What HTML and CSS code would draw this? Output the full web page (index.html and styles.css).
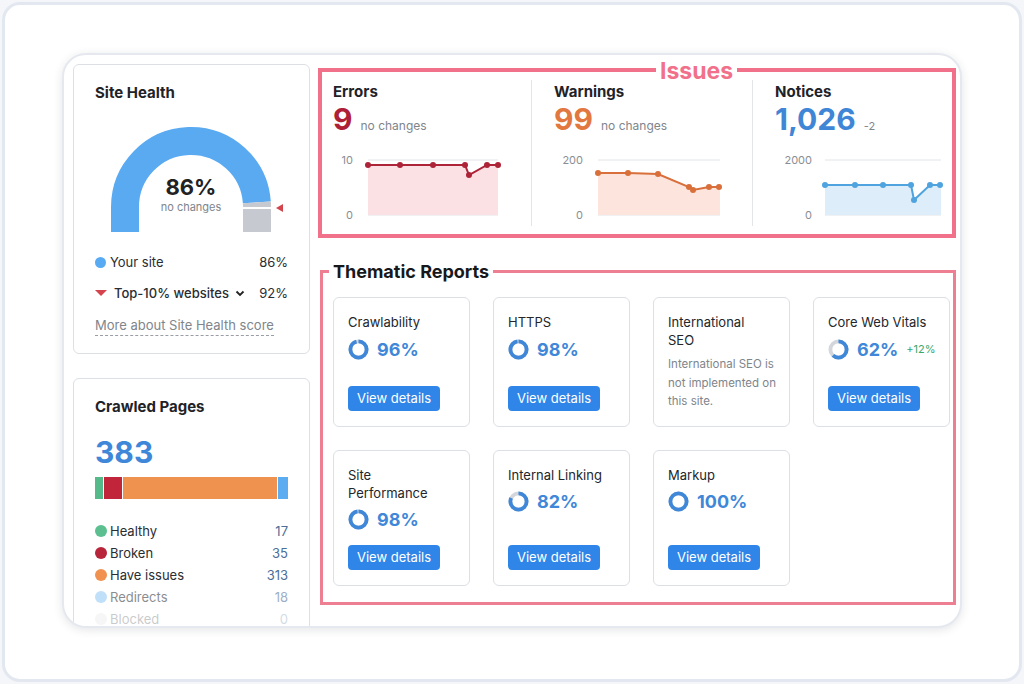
FILE: index.html
```html
<!DOCTYPE html>
<html lang="en">
<head>
    <meta charset="UTF-8">
    <meta name="viewport" content="width=device-width, initial-scale=1.0">
    <title>Site Audit Overview</title>
    <link rel="stylesheet" href="styles.css">
</head>
<body>
    <div class="frame">
        <div class="panel">
            <aside class="side">
                <section class="card health">
                    <h2 class="card-title">Site Health</h2>
                    <svg class="gauge" width="193" height="112" viewBox="0 0 193 112">
                        <path class="gauge-fill" d="M30 112 V87 A66 66 0 0 1 161.84 82.4"/>
                        <path class="gauge-rest" d="M161.84 82.4 A66 66 0 0 1 162 87 V112"/>
                        <line class="gauge-mark" x1="147" y1="88" x2="177" y2="88"/>
                        <polygon class="gauge-pointer" points="181,88 188,84 188,92"/>
                        <text class="gauge-value" x="96" y="75" text-anchor="middle">86%</text>
                        <text class="gauge-note" x="96" y="91" text-anchor="middle">no changes</text>
                    </svg>
                    <ul class="legend health-legend">
                        <li><span class="dot dot-site"></span>Your site<span class="value">86%</span></li>
                        <li class="top-sites">
                            <span class="tri-down"></span>Top-10% websites
                            <svg class="chevron" width="10" height="10" viewBox="0 0 10 10"><path d="M1.5 3.5 L5 7 L8.5 3.5"/></svg>
                            <span class="value">92%</span>
                        </li>
                    </ul>
                    <a class="more-link" href="#">More about Site Health score</a>
                </section>

                <section class="card crawled">
                    <h2 class="card-title">Crawled Pages</h2>
                    <div class="crawled-total">383</div>
                    <div class="stack-bar">
                        <span class="seg seg-healthy" style="width: 4.4%"></span>
                        <span class="seg seg-broken" style="width: 9.1%"></span>
                        <span class="seg seg-issues" style="width: 81.0%"></span>
                        <span class="seg seg-redirects" style="width: 5.5%"></span>
                    </div>
                    <ul class="legend crawled-legend">
                        <li><span class="dot dot-healthy"></span>Healthy<span class="value">17</span></li>
                        <li><span class="dot dot-broken"></span>Broken<span class="value">35</span></li>
                        <li><span class="dot dot-issues"></span>Have issues<span class="value">313</span></li>
                        <li class="faded"><span class="dot dot-redirects"></span>Redirects<span class="value">18</span></li>
                        <li class="faded-more"><span class="dot dot-blocked"></span>Blocked<span class="value">0</span></li>
                    </ul>
                </section>
            </aside>

            <main class="main">
                <section class="issues-box">
                    <span class="box-label issues-label">Issues</span>

                    <div class="issue errors">
                        <h3 class="issue-title">Errors</h3>
                        <div class="issue-count"><span class="count">9</span><span class="change">no changes</span></div>
                        <svg class="trend" width="180" height="72" viewBox="0 0 180 72">
                            <line class="grid" x1="35" y1="10" x2="165" y2="10"/>
                            <line class="grid" x1="35" y1="65" x2="165" y2="65"/>
                            <text class="axis" x="20" y="14" text-anchor="end">10</text>
                            <text class="axis" x="20" y="69" text-anchor="end">0</text>
                            <polygon class="area" points="35,65 35,15 67,15 100,15 132,15 136,25 154,15 165,15 165,65"/>
                            <polyline class="series" points="35,15 67,15 100,15 132,15 136,25 154,15 165,15"/>
                            <g class="points">
                                <circle cx="35" cy="15" r="3"/><circle cx="67" cy="15" r="3"/><circle cx="100" cy="15" r="3"/>
                                <circle cx="132" cy="15" r="3"/><circle cx="136" cy="25" r="3"/><circle cx="154" cy="15" r="3"/>
                                <circle cx="165" cy="15" r="3"/>
                            </g>
                        </svg>
                    </div>

                    <div class="issue warnings">
                        <h3 class="issue-title">Warnings</h3>
                        <div class="issue-count"><span class="count">99</span><span class="change">no changes</span></div>
                        <svg class="trend" width="180" height="72" viewBox="0 0 180 72">
                            <line class="grid" x1="44" y1="10" x2="166" y2="10"/>
                            <line class="grid" x1="44" y1="65" x2="166" y2="65"/>
                            <text class="axis" x="29" y="14" text-anchor="end">200</text>
                            <text class="axis" x="29" y="69" text-anchor="end">0</text>
                            <polygon class="area" points="44,65 44,23 74,23 104,24 135,37 139,40 155,37 166,37 166,65"/>
                            <polyline class="series" points="44,23 74,23 104,24 135,37 139,40 155,37 166,37"/>
                            <g class="points">
                                <circle cx="44" cy="23" r="3"/><circle cx="74" cy="23" r="3"/><circle cx="104" cy="24" r="3"/>
                                <circle cx="135" cy="37" r="3"/><circle cx="139" cy="40" r="3"/><circle cx="155" cy="37" r="3"/>
                                <circle cx="165" cy="37" r="3"/>
                            </g>
                        </svg>
                    </div>

                    <div class="issue notices">
                        <h3 class="issue-title">Notices</h3>
                        <div class="issue-count"><span class="count">1,026</span><span class="change">-2</span></div>
                        <svg class="trend" width="177" height="72" viewBox="0 0 177 72">
                            <line class="grid" x1="50" y1="10" x2="166" y2="10"/>
                            <line class="grid" x1="50" y1="65" x2="166" y2="65"/>
                            <text class="axis" x="37" y="14" text-anchor="end">2000</text>
                            <text class="axis" x="37" y="69" text-anchor="end">0</text>
                            <polygon class="area" points="50,65 50,35 80,35 108,35 136,35 139,50 155,35 166,35 166,65"/>
                            <polyline class="series" points="50,35 80,35 108,35 136,35 139,50 155,35 166,35"/>
                            <g class="points">
                                <circle cx="50" cy="35" r="3"/><circle cx="80" cy="35" r="3"/><circle cx="108" cy="35" r="3"/>
                                <circle cx="136" cy="35" r="3"/><circle cx="139" cy="50" r="3"/><circle cx="155" cy="35" r="3"/>
                                <circle cx="165" cy="35" r="3"/>
                            </g>
                        </svg>
                    </div>
                </section>

                <section class="thematic">
                    <h2 class="box-label thematic-label">Thematic Reports</h2>
                    <div class="report-grid">
                        <div class="report">
                            <div class="report-title">Crawlability</div>
                            <div class="report-score">
                                <svg class="donut" viewBox="0 0 22 22"><circle class="track" cx="11" cy="11" r="8.5"/><circle class="arc" cx="11" cy="11" r="8.5" pathLength="100" stroke-dasharray="96 100"/></svg>
                                <span class="pct">96%</span>
                            </div>
                            <button class="btn">View details</button>
                        </div>
                        <div class="report">
                            <div class="report-title">HTTPS</div>
                            <div class="report-score">
                                <svg class="donut" viewBox="0 0 22 22"><circle class="track" cx="11" cy="11" r="8.5"/><circle class="arc" cx="11" cy="11" r="8.5" pathLength="100" stroke-dasharray="98 100"/></svg>
                                <span class="pct">98%</span>
                            </div>
                            <button class="btn">View details</button>
                        </div>
                        <div class="report">
                            <div class="report-title">International SEO</div>
                            <p class="report-note">International SEO is not implemented on this site.</p>
                        </div>
                        <div class="report">
                            <div class="report-title">Core Web Vitals</div>
                            <div class="report-score">
                                <svg class="donut" viewBox="0 0 22 22"><circle class="track" cx="11" cy="11" r="8.5"/><circle class="arc" cx="11" cy="11" r="8.5" pathLength="100" stroke-dasharray="62 100"/></svg>
                                <span class="pct">62%</span>
                                <span class="delta">+12%</span>
                            </div>
                            <button class="btn">View details</button>
                        </div>
                        <div class="report">
                            <div class="report-title">Site Performance</div>
                            <div class="report-score">
                                <svg class="donut" viewBox="0 0 22 22"><circle class="track" cx="11" cy="11" r="8.5"/><circle class="arc" cx="11" cy="11" r="8.5" pathLength="100" stroke-dasharray="98 100"/></svg>
                                <span class="pct">98%</span>
                            </div>
                            <button class="btn">View details</button>
                        </div>
                        <div class="report">
                            <div class="report-title">Internal Linking</div>
                            <div class="report-score">
                                <svg class="donut" viewBox="0 0 22 22"><circle class="track" cx="11" cy="11" r="8.5"/><circle class="arc" cx="11" cy="11" r="8.5" pathLength="100" stroke-dasharray="82 100"/></svg>
                                <span class="pct">82%</span>
                            </div>
                            <button class="btn">View details</button>
                        </div>
                        <div class="report">
                            <div class="report-title">Markup</div>
                            <div class="report-score">
                                <svg class="donut" viewBox="0 0 22 22"><circle class="track" cx="11" cy="11" r="8.5"/><circle class="arc" cx="11" cy="11" r="8.5" pathLength="100" stroke-dasharray="100 100"/></svg>
                                <span class="pct">100%</span>
                            </div>
                            <button class="btn">View details</button>
                        </div>
                    </div>
                </section>

                <h2 class="next-title">Top Issues</h2>
            </main>
        </div>
    </div>
</body>
</html>
```

FILE: styles.css
```css
:root {
    --blue: #3f87d8;
    --button: #2f86e8;
    --pink: #f1718a;
    --pink-soft: #ee7f93;
    --text: #1f2328;
    --muted: #80858c;
    --line: #dcdfe4;
}

* {
    margin: 0;
    padding: 0;
    box-sizing: border-box;
}

body {
    background: #f4f6f9;
    font-family: Inter, "Noto Sans", sans-serif;
    color: var(--text);
}

.frame {
    width: 1020px;
    height: 680px;
    margin: 2px;
    border: 3px solid #e3e8f0;
    border-radius: 18px;
    background: #fff;
    padding: 48px 0 0 57px;
}

.panel {
    width: 900px;
    height: 575px;
    border: 2px solid #e5e9ef;
    border-radius: 24px;
    box-shadow: 0 2px 10px rgba(30, 40, 60, 0.12);
    background: #fff;
    overflow: hidden;
    display: grid;
    grid-template-columns: 237px 1fr;
    column-gap: 8px;
    align-items: start;
    padding: 9px 4px 0 9px;
}

/* left column cards */

.card {
    border: 1px solid var(--line);
    border-radius: 6px;
    background: #fff;
    padding: 18px 21px 17px;
}

.card + .card {
    margin-top: 24px;
}

.card-title {
    font-size: 15px;
    line-height: 20px;
    font-weight: 700;
}

.gauge {
    display: block;
    margin-top: 17px;
}

.gauge path {
    fill: none;
    stroke-width: 28;
}

.gauge-fill {
    stroke: #5aaaf2;
}

.gauge-rest {
    stroke: #c6c9cf;
}

.gauge-mark {
    stroke: #fff;
    stroke-width: 2;
}

.gauge-pointer {
    fill: #d4444f;
}

.gauge-value {
    font-size: 22px;
    font-weight: 700;
    fill: #222;
}

.gauge-note {
    font-size: 11px;
    fill: var(--muted);
}

.legend {
    list-style: none;
}

.legend li {
    display: flex;
    align-items: center;
    font-size: 13px;
    color: #2a2d31;
}

.legend .value {
    margin-left: auto;
}

.dot {
    width: 11px;
    height: 11px;
    border-radius: 50%;
    margin-right: 4px;
    flex-shrink: 0;
}

.health-legend {
    margin-top: 20px;
}

.health-legend li {
    height: 20px;
}

.health-legend li + li {
    margin-top: 11px;
}

.dot-site {
    background: #58aaf2;
}

.top-sites {
    font-weight: 500;
}

.tri-down {
    width: 0;
    height: 0;
    border-left: 6px solid transparent;
    border-right: 6px solid transparent;
    border-top: 6px solid #d4444f;
    margin: 0 7px 0 0;
}

.chevron {
    margin-left: 6px;
}

.chevron path {
    fill: none;
    stroke: #222;
    stroke-width: 1.8;
}

.top-sites .value {
    font-weight: 400;
}

.more-link {
    display: inline-block;
    margin-top: 13px;
    font-size: 13px;
    line-height: 19px;
    color: var(--muted);
    text-decoration: none;
    border-bottom: 1px dashed #9a9ea4;
}

.crawled-total {
    margin-top: 17px;
    font-size: 30px;
    line-height: 36px;
    font-weight: 700;
    color: var(--blue);
}

.stack-bar {
    display: flex;
    gap: 1px;
    height: 22px;
    margin-top: 7px;
}

.seg-healthy { background: #55b98a; }
.seg-broken { background: #c0253a; }
.seg-issues { background: #f0924f; }
.seg-redirects { background: #5cacf2; }

.crawled-legend {
    margin-top: 21px;
}

.crawled-legend li {
    line-height: 22px;
}

.crawled-legend .dot {
    width: 12px;
    height: 12px;
    margin-right: 3px;
}

.crawled-legend .value {
    color: #4c6f99;
}

.dot-healthy { background: #5cbf8f; }
.dot-broken { background: #b8243a; }
.dot-issues { background: #f0914f; }
.dot-redirects { background: #8cc6f4; }
.dot-blocked { background: #d9d9d9; }

.crawled-legend .faded {
    opacity: 0.55;
}

.crawled-legend .faded-more {
    opacity: 0.25;
}

/* right column */

.main {
    padding-top: 4px;
}

.box-label {
    position: absolute;
    background: #fff;
    padding: 0 4px;
    white-space: nowrap;
}

.issues-box {
    position: relative;
    height: 170px;
    border: 4px solid var(--pink);
    display: grid;
    grid-template-columns: 209px 221px 1fr;
}

.issues-label {
    top: -14px;
    left: 334px;
    font-size: 23px;
    line-height: 26px;
    font-weight: 700;
    color: var(--pink);
}

.issue {
    margin: 8px 0 8px;
    padding: 2px 0 0 22px;
}

.issue + .issue {
    border-left: 1px solid #e3e5e8;
}

.issue.errors {
    padding-left: 11px;
}

.issue-title {
    font-size: 15px;
    line-height: 20px;
    font-weight: 700;
}

.issue-count {
    display: flex;
    align-items: baseline;
    gap: 8px;
}

.count {
    font-size: 30px;
    line-height: 34px;
    font-weight: 700;
}

.change {
    font-size: 12px;
    color: var(--muted);
}

.notices .change {
    font-size: 11px;
}

.trend {
    display: block;
    margin-top: 14px;
}

.trend .grid {
    stroke: #e2e4e8;
    stroke-width: 1;
}

.trend .axis {
    font-size: 11px;
    fill: #8a8e94;
}

.trend .series {
    fill: none;
    stroke-width: 2;
}

.errors .count { color: #ae2036; }
.errors .area { fill: #fbe0e4; }
.errors .series { stroke: #ad2438; }
.errors .points { fill: #ad2438; }

.warnings .count { color: #e2773f; }
.warnings .area { fill: #fde5dd; }
.warnings .series { stroke: #d96f3a; }
.warnings .points { fill: #d96f3a; }

.notices .count { color: #3f86d6; }
.notices .area { fill: #ddeefa; }
.notices .series { stroke: #4fa3de; }
.notices .points { fill: #4fa3de; }

.thematic {
    position: relative;
    margin: 32px 0 0 2px;
    border: 3px solid var(--pink-soft);
    padding: 24px 3px 16px 10px;
}

.thematic-label {
    top: -13px;
    left: 6px;
    font-size: 18px;
    line-height: 24px;
    font-weight: 700;
    color: #16181b;
}

.report-grid {
    display: grid;
    grid-template-columns: repeat(4, 137px);
    gap: 23px;
}

.report {
    display: flex;
    flex-direction: column;
    border: 1px solid var(--line);
    border-radius: 6px;
    padding: 15px 16px 15px 14px;
}

.report-title {
    font-size: 13px;
    line-height: 18px;
    color: #23262a;
}

.report-score {
    display: flex;
    align-items: center;
    gap: 8px;
    height: 22px;
    margin: 7px 0 14px;
}

.donut {
    width: 21px;
    height: 21px;
    flex-shrink: 0;
    transform: rotate(-90deg);
}

.donut circle {
    fill: none;
    stroke-width: 4;
}

.donut .track {
    stroke: #d3d6db;
}

.donut .arc {
    stroke: var(--blue);
}

.pct {
    font-size: 18px;
    font-weight: 700;
    color: var(--blue);
}

.delta {
    font-size: 11px;
    color: #3aa76d;
}

.report-note {
    margin: 6px -8px 0 0;
    font-size: 11.5px;
    line-height: 18.5px;
    color: var(--muted);
}

.btn {
    align-self: flex-start;
    margin-top: auto;
    height: 25px;
    padding: 0 9px;
    border: none;
    border-radius: 4px;
    background: var(--button);
    color: #fff;
    font-family: inherit;
    font-size: 13px;
    cursor: pointer;
}

.next-title {
    margin: 18px 0 0 15px;
    font-size: 18px;
    line-height: 24px;
    font-weight: 700;
    color: #d6d9dd;
}
```
